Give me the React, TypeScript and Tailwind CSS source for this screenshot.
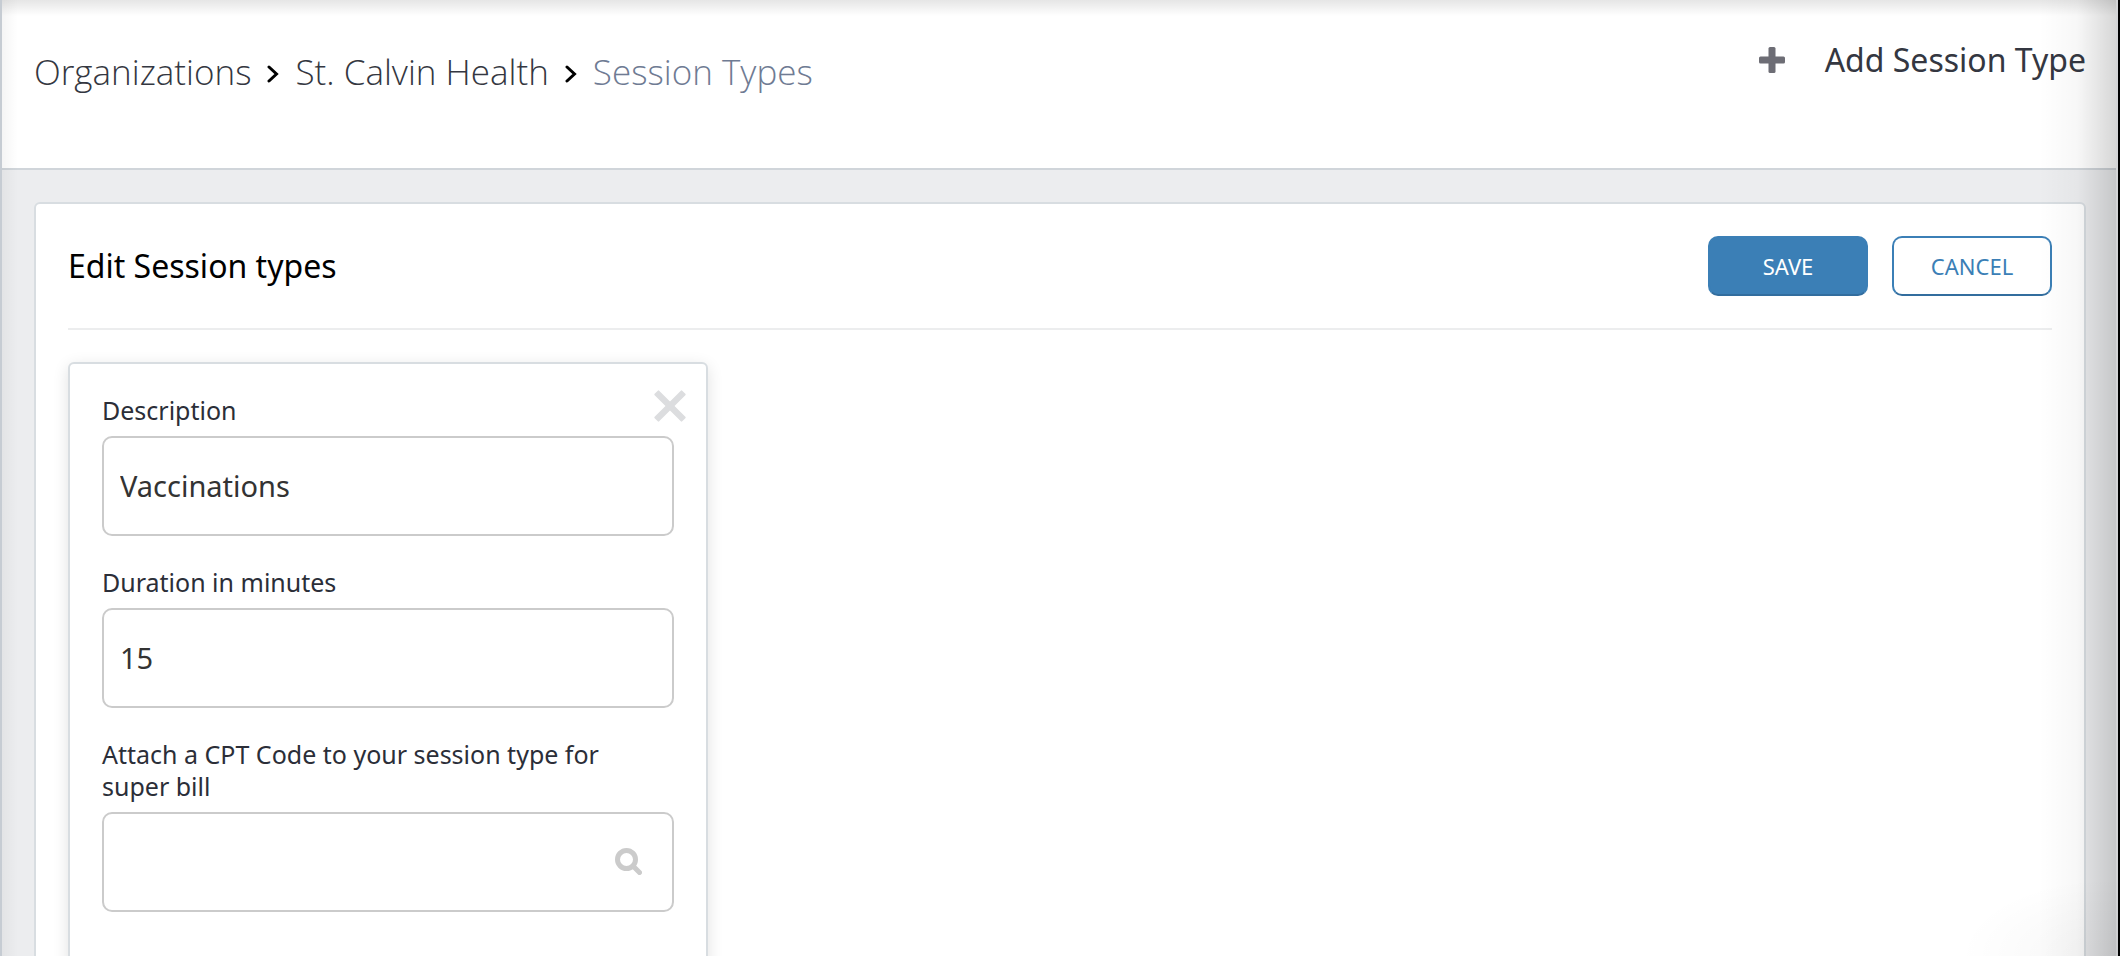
import { useState } from 'react';
import type { InputHTMLAttributes, ReactNode } from 'react';

const breadcrumbs = [
  { label: 'Organizations', href: '#organizations' },
  { label: 'St. Calvin Health', href: '#st-calvin-health' },
];

function ChevronIcon() {
  return (
    <svg viewBox="0 0 12 18" className="mt-1 h-[18px] w-3" fill="none" aria-hidden="true">
      <path d="M2 2l7.5 7L2 16" stroke="#000" strokeWidth="3" strokeLinecap="round" />
    </svg>
  );
}

function PlusIcon() {
  return (
    <svg viewBox="0 0 26 26" className="h-[26px] w-[26px]" fill="#6d6d75" aria-hidden="true">
      <rect x="9.5" y="0" width="7" height="26" rx="1.5" />
      <rect x="0" y="9.5" width="26" height="7" rx="1.5" />
    </svg>
  );
}

function CloseIcon() {
  return (
    <svg viewBox="0 0 32 32" className="h-8 w-8" fill="#dcdddf" aria-hidden="true">
      <rect x="-3.5" y="12.8" width="39" height="6.4" rx="1" transform="rotate(45 16 16)" />
      <rect x="-3.5" y="12.8" width="39" height="6.4" rx="1" transform="rotate(-45 16 16)" />
    </svg>
  );
}

function SearchIcon() {
  return (
    <svg viewBox="0 0 27 27" className="h-[27px] w-[27px]" fill="none" stroke="#cbcbcb" aria-hidden="true">
      <circle cx="11.5" cy="11.5" r="9" strokeWidth="5" />
      <path d="M18.5 18.5l6 6" strokeWidth="5" strokeLinecap="round" />
    </svg>
  );
}

interface FieldProps extends InputHTMLAttributes<HTMLInputElement> {
  id: string;
  label: string;
  icon?: ReactNode;
}

function Field({ id, label, icon, ...inputProps }: FieldProps) {
  return (
    <div className="flex flex-col gap-[10px]">
      <label htmlFor={id} className="pr-4 text-[25px] leading-8 text-[#2b2e38]">
        {label}
      </label>
      <div className="flex h-[100px] items-center rounded-[10px] border-2 border-[#cbcbcb] bg-white pr-[30px] pb-[2px]">
        <input
          id={id}
          type="text"
          className="h-full min-w-0 flex-1 bg-transparent px-4 text-[29px] text-[#333] outline-none"
          {...inputProps}
        />
        {icon}
      </div>
    </div>
  );
}

export default function App() {
  const [description, setDescription] = useState('Vaccinations');
  const [duration, setDuration] = useState('15');
  const [cptCode, setCptCode] = useState('');

  return (
    <div className="relative flex h-screen flex-col overflow-hidden border-l-2 border-r-2 border-l-[#c6ccd3] border-r-black bg-[#ecedef] font-['Noto_Sans',sans-serif]">
      <header className="flex shrink-0 items-start justify-between border-b-2 border-[#d0d5da] bg-white px-8 pt-9 pb-[76px]">
        <nav
          aria-label="Breadcrumb"
          className="flex items-center gap-4 pt-4 font-['Open_Sans',sans-serif] text-[35px] leading-10 font-light text-[#343741]"
        >
          {breadcrumbs.map(({ label, href }) => (
            <div key={href} className="flex items-center gap-4">
              <a href={href}>{label}</a>
              <ChevronIcon />
            </div>
          ))}
          <span aria-current="page" className="text-[#6f7b93]">
            Session Types
          </span>
        </nav>
        <button type="button" className="flex items-center gap-10 text-[32px] leading-12 text-[#343741]">
          <PlusIcon />
          Add Session Type
        </button>
      </header>

      <main className="flex-1 p-8">
        <section className="rounded-md border-2 border-[#d8dde1] bg-white p-8">
          <div className="flex items-center justify-between border-b-2 border-[#ecedee] pb-8">
            <h1 className="text-[32px] leading-12 text-black">Edit Session types</h1>
            <div className="flex gap-6">
              <button
                type="button"
                className="h-15 w-40 rounded-[10px] border-2 border-[#3b7fb6] border-b-[#326d9e] bg-[#3b7fb6] text-[22px] leading-8 text-white"
              >
                SAVE
              </button>
              <button
                type="button"
                className="h-15 w-40 rounded-[10px] border-2 border-[#3b7fb6] border-b-[#326d9e] bg-white text-[22px] leading-8 text-[#3b7fb6]"
              >
                CANCEL
              </button>
            </div>
          </div>

          <form className="relative mt-8 flex w-[640px] flex-col gap-[30px] rounded-md border-2 border-[#d8dde1] bg-white px-8 pt-[30px] pb-24 shadow-[0_4px_16px_rgba(0,0,0,0.12)]">
            <button type="button" aria-label="Remove session type" className="absolute top-[26px] right-5">
              <CloseIcon />
            </button>
            <Field
              id="description"
              label="Description"
              value={description}
              onChange={(e) => setDescription(e.target.value)}
            />
            <Field
              id="duration"
              label="Duration in minutes"
              inputMode="numeric"
              value={duration}
              onChange={(e) => setDuration(e.target.value)}
            />
            <Field
              id="cpt-code"
              label="Attach a CPT Code to your session type for super bill"
              icon={<SearchIcon />}
              value={cptCode}
              onChange={(e) => setCptCode(e.target.value)}
            />
          </form>
        </section>
      </main>

      {/* Soft shadows cast over the edges of the panel */}
      <div className="pointer-events-none absolute inset-x-0 top-0 h-4 bg-linear-to-b from-black/10 to-transparent" />
      <div className="pointer-events-none absolute inset-y-0 left-0 w-4 bg-linear-to-r from-black/4 to-transparent" />
      <div className="pointer-events-none absolute inset-y-0 right-0 w-20 border-r-2 border-[#d3d4d6] bg-linear-to-r from-transparent via-black/3 to-black/16" />
      <div className="pointer-events-none absolute right-0 bottom-0 h-20 w-40 bg-radial-[at_100%_100%] from-black/4 to-transparent to-70%" />
    </div>
  );
}
